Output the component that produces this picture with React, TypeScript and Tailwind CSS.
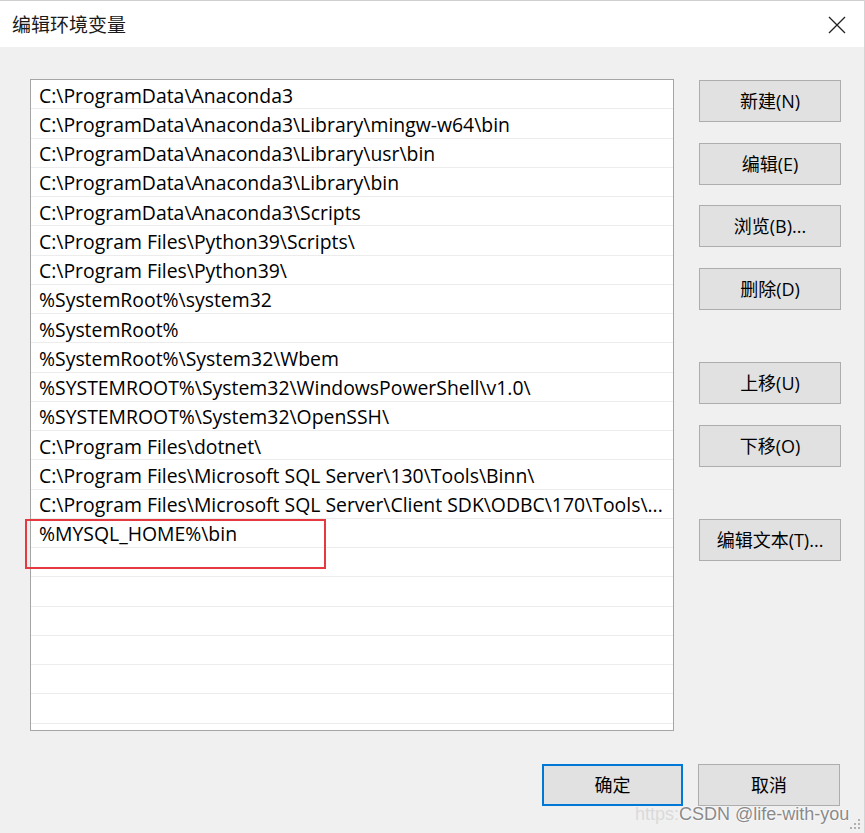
import React from "react";

const rows = [
  "C:\\ProgramData\\Anaconda3",
  "C:\\ProgramData\\Anaconda3\\Library\\mingw-w64\\bin",
  "C:\\ProgramData\\Anaconda3\\Library\\usr\\bin",
  "C:\\ProgramData\\Anaconda3\\Library\\bin",
  "C:\\ProgramData\\Anaconda3\\Scripts",
  "C:\\Program Files\\Python39\\Scripts\\",
  "C:\\Program Files\\Python39\\",
  "%SystemRoot%\\system32",
  "%SystemRoot%",
  "%SystemRoot%\\System32\\Wbem",
  "%SYSTEMROOT%\\System32\\WindowsPowerShell\\v1.0\\",
  "%SYSTEMROOT%\\System32\\OpenSSH\\",
  "C:\\Program Files\\dotnet\\",
  "C:\\Program Files\\Microsoft SQL Server\\130\\Tools\\Binn\\",
  "C:\\Program Files\\Microsoft SQL Server\\Client SDK\\ODBC\\170\\Tools\\...",
  "%MYSQL_HOME%\\bin",
];

const allRows = [...rows, ...Array(6).fill("")];

function Btn({ label, className = "" }: { label: string; className?: string }) {
  return (
    <div
      className={`h-[42px] w-[142px] flex items-center justify-center bg-[#e1e1e1] border border-[#adadad] text-[18px] text-black ${className}`}
    >
      {label}
    </div>
  );
}

export default function App() {
  return (
    <div className="relative w-[865px] h-[833px] bg-[#f0f0f0] overflow-hidden font-['Open_Sans','Noto_Sans_CJK_SC',sans-serif] border-r border-[#d4d4d4]">
      <div className="h-[47px] bg-white border-t border-[#cfcfcf] flex items-center justify-between pl-[12px] pr-[18px]">
        <span className="text-[19px] text-[#1a1a1a] font-['Noto_Sans_CJK_SC',sans-serif]">编辑环境变量</span>
        <svg width="18" height="18" viewBox="0 0 18 18" className="mt-[1px]">
          <path d="M1 1 L17 17 M17 1 L1 17" stroke="#222" strokeWidth="1.3" fill="none" />
        </svg>
      </div>
      <div className="flex pl-[30px] pt-[32px]">
        <div className="w-[644px] h-[652px] border border-[#a5a5a5] bg-white overflow-hidden">
          {allRows.map((r, i) => (
            <div
              key={i}
              className="h-[29.25px] border-b border-[#ececec] flex items-center pl-[8px] pt-[2px] text-[19.4px] text-black whitespace-nowrap overflow-hidden"
            >
              {r}
            </div>
          ))}
        </div>
        <div className="ml-[25px] flex flex-col pt-[1px]">
          <Btn label="新建(N)" />
          <Btn label="编辑(E)" className="mt-[21px]" />
          <Btn label="浏览(B)..." className="mt-[20px]" />
          <Btn label="删除(D)" className="mt-[21px]" />
          <Btn label="上移(U)" className="mt-[52px]" />
          <Btn label="下移(O)" className="mt-[21px]" />
          <Btn label="编辑文本(T)..." className="mt-[52px]" />
        </div>
      </div>
      <div className="flex justify-end pr-[24px] mt-[33px] gap-[15px]">
        <div className="h-[42px] w-[141px] flex items-center justify-center bg-[#e1e1e1] border-2 border-[#0078d7] text-[18px] text-black">
          确定
        </div>
        <Btn label="取消" />
      </div>

      <div className="absolute left-[25px] top-[519px] w-[301px] h-[50px] border-2 border-[#e53a3f]" />

      <div className="absolute left-[635px] top-[802px] flex text-[18px] leading-[24px] font-['Liberation_Sans',sans-serif] whitespace-nowrap">
        <span className="text-[#dadada]">https:</span>
        <span className="text-[#8a8a8a] [text-shadow:0_0_2px_#ffffff,0_0_2px_#ffffff]">CSDN @life-with-you</span>
      </div>

      <svg className="absolute right-[3px] bottom-[3px]" width="12" height="12" viewBox="0 0 12 12">
        <rect x="9" y="1" width="2" height="2" fill="#b0b0b0" />
        <rect x="5" y="5" width="2" height="2" fill="#b0b0b0" />
        <rect x="9" y="5" width="2" height="2" fill="#b0b0b0" />
        <rect x="1" y="9" width="2" height="2" fill="#b0b0b0" />
        <rect x="5" y="9" width="2" height="2" fill="#b0b0b0" />
        <rect x="9" y="9" width="2" height="2" fill="#b0b0b0" />
      </svg>
    </div>
  );
}
